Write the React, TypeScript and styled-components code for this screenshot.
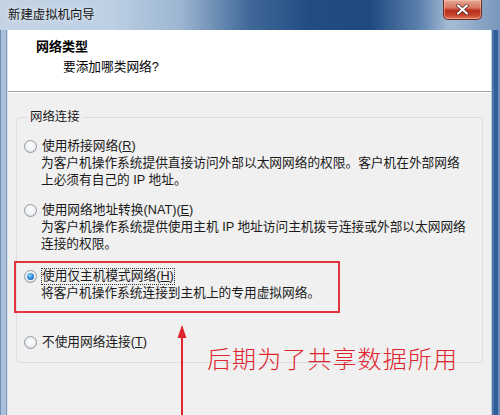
import React from 'react';
import styled, { createGlobalStyle } from 'styled-components';

const UI_FONT = `"Liberation Sans", "Noto Sans CJK SC", sans-serif`;

const GlobalStyle = createGlobalStyle`
  html, body { margin: 0; padding: 0; background: #f0f0f0; }
  body { font-family: ${UI_FONT}; font-size: 12.7px; color: #000; }
`;

const Window = styled.div`
  position: relative;
  width: 500px;
  height: 415px;
  overflow: hidden;
  display: flex;
  flex-direction: column;
  background: #8fa9c6;
`;

const TitleBar = styled.div`
  height: 30px;
  flex: none;
  display: flex;
  align-items: flex-start;
  background: linear-gradient(to right, #c3d3e4 0%, #bdd0e4 22%, #9db6d2 36%, #3f6898 50%, #224d82 62%, #1f4a80 74%, #5c82ad 84%, #a7bdd5 90%, #7796bb 100%);
`;

const TitleText = styled.div`
  padding: 6px 0 0 8px;
  font-size: 12.4px;
  line-height: 18px;
  color: #111;
  text-shadow: 0 0 6px rgba(255, 255, 255, 0.9);
`;

const CloseButton = styled.div`
  margin-left: auto;
  margin-right: 18px;
  width: 39px;
  height: 20px;
  box-sizing: border-box;
  border: 1px solid #6e2a22;
  border-top: 0;
  border-radius: 0 0 5px 5px;
  background: linear-gradient(to bottom, #e7a897 0%, #d87761 40%, #b9301e 55%, #c8442c 80%, #e17b5c 100%);
  display: flex;
  align-items: center;
  justify-content: center;
  box-shadow: inset 0 0 0 1px rgba(255, 210, 200, 0.45);
`;

const Frame = styled.div`
  flex: 1;
  display: flex;
  min-height: 0;
`;

const FrameSide = styled.div<{ $side: 'left' | 'right' }>`
  flex: none;
  width: ${p => (p.$side === 'left' ? 8 : 9)}px;
  background: ${p =>
    p.$side === 'left'
      ? 'linear-gradient(to right, #6f8fb4 0 1px, #a9c0d8 1px 6px, #7d9abd 6px 7px, #d8e2ec 7px)'
      : 'linear-gradient(to right, #b8cbe0 0 1px, #4a74a6 1px 3px, #2f5e98 3px 7px, #6e8fb8 7px)'};
`;

const Client = styled.div`
  flex: 1;
  display: flex;
  flex-direction: column;
  background: #f0f0f0;
  min-width: 0;
`;

const Header = styled.div`
  height: 62px;
  box-sizing: border-box;
  background: #fff;
  border-bottom: 1px solid #a0a0a0;
  padding: 8px 0 0 28px;
`;

const HeaderTitle = styled.div`
  font-weight: bold;
  font-size: 13px;
  line-height: 18px;
`;

const HeaderSub = styled.div`
  margin: 2px 0 0 27px;
  line-height: 18px;
`;

const Body = styled.div`
  flex: 1;
  border-top: 1px solid #fff;
  padding: 0 8px;
`;

const Group = styled.fieldset`
  margin: 16px 0 0 0;
  padding: 12px 0 11px 7px;
  border: 1px solid #d5dfe5;
  border-radius: 3px;
  min-width: 0;
`;

const Legend = styled.legend`
  margin-left: 4px;
  padding: 0 2px;
  font-size: 12.4px;
  line-height: 17px;
  color: #1a1a1a;
`;

const Option = styled.div<{ $gap: number }>`
  position: relative;
  margin-top: ${p => p.$gap}px;
  line-height: 17px;
  color: #1a1a1a;
`;

const OptionRow = styled.div`
  display: flex;
  align-items: center;
  gap: 4px;
`;

const Radio = styled.span<{ $checked?: boolean }>`
  flex: none;
  width: 13px;
  height: 13px;
  box-sizing: border-box;
  border-radius: 50%;
  border: 1px solid #8e9aa6;
  background: radial-gradient(circle at 50% 40%, #ffffff 0%, #f0f0f0 55%, #c9ced4 100%);
  display: flex;
  align-items: center;
  justify-content: center;
  &::after {
    content: '';
    display: ${p => (p.$checked ? 'block' : 'none')};
    width: 7px;
    height: 7px;
    border-radius: 50%;
    background: radial-gradient(circle at 40% 35%, #9fdcff 0%, #2f8fd8 45%, #0c4c96 100%);
  }
`;

const Label = styled.span<{ $focused?: boolean }>`
  padding: 0 1px;
  outline: ${p => (p.$focused ? '1px dotted #333' : 'none')};
  outline-offset: -1px;
`;

const Key = styled.span`
  text-decoration: underline;
`;

const Desc = styled.div`
  padding-left: 17px;
`;

const Highlight = styled.div`
  position: absolute;
  left: -10px;
  top: -7px;
  width: 326px;
  height: 52px;
  box-sizing: border-box;
  border: 2px solid #e0343f;
  pointer-events: none;
`;

const Arrow = styled.svg`
  position: absolute;
  left: 174px;
  top: 324px;
`;

const Note = styled.div`
  position: absolute;
  left: 207px;
  top: 343px;
  font-family: "Noto Sans CJK SC", sans-serif;
  font-weight: 300;
  font-size: 24px;
  line-height: 30px;
  color: #e0242e;
  letter-spacing: 1.1px;
`;

function App() {
  return (
    <>
      <GlobalStyle />
      <Window>
        <TitleBar>
          <TitleText>新建虚拟机向导</TitleText>
          <CloseButton>
            <svg width="13" height="11" viewBox="0 0 13 11">
              <path d="M2 1.5 L11 9.5 M11 1.5 L2 9.5" stroke="#4a1a14" strokeWidth="3.6" strokeLinecap="round" />
              <path d="M2 1.5 L11 9.5 M11 1.5 L2 9.5" stroke="#fff" strokeWidth="2.2" strokeLinecap="round" />
            </svg>
          </CloseButton>
        </TitleBar>
        <Frame>
          <FrameSide $side="left" />
          <Client>
            <Header>
              <HeaderTitle>网络类型</HeaderTitle>
              <HeaderSub>要添加哪类网络?</HeaderSub>
            </Header>
            <Body>
              <Group>
                <Legend>网络连接</Legend>
                <Option $gap={0}>
                  <OptionRow>
                    <Radio />
                    <Label>使用桥接网络(<Key>R</Key>)</Label>
                  </OptionRow>
                  <Desc>为客户机操作系统提供直接访问外部以太网网络的权限。客户机在外部网络</Desc>
                  <Desc>上必须有自己的 IP 地址。</Desc>
                </Option>
                <Option $gap={13}>
                  <OptionRow>
                    <Radio />
                    <Label>使用网络地址转换(NAT)(<Key>E</Key>)</Label>
                  </OptionRow>
                  <Desc>为客户机操作系统提供使用主机 IP 地址访问主机拨号连接或外部以太网网络</Desc>
                  <Desc>连接的权限。</Desc>
                </Option>
                <Option $gap={15}>
                  <Highlight />
                  <OptionRow>
                    <Radio $checked />
                    <Label $focused>使用仅主机模式网络(<Key>H</Key>)</Label>
                  </OptionRow>
                  <Desc>将客户机操作系统连接到主机上的专用虚拟网络。</Desc>
                </Option>
                <Option $gap={32}>
                  <OptionRow>
                    <Radio />
                    <Label>不使用网络连接(<Key>T</Key>)</Label>
                  </OptionRow>
                </Option>
              </Group>
            </Body>
          </Client>
          <FrameSide $side="right" />
        </Frame>
        <Arrow width="16" height="92" viewBox="0 0 16 92">
          <path d="M8 3 L8 92" stroke="#e0242e" strokeWidth="2" />
          <path d="M8 1 L3.5 14 L12.5 14 Z" fill="#e0242e" />
        </Arrow>
        <Note>后期为了共享数据所用</Note>
      </Window>
    </>
  );
}

export default App;
